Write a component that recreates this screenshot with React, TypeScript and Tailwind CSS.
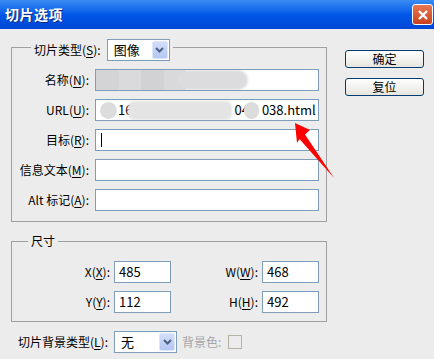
import React from 'react'

const font = { fontFamily: '"Noto Sans CJK SC", "Liberation Sans", sans-serif' }

function Key({ k }: { k: string }) {
    return (
        <>
            (<span className="underline underline-offset-2">{k}</span>):
        </>
    )
}

function Chevron() {
    return (
        <div className="w-[16px] h-[18px] rounded-[2px] border border-[#dfe8fb] bg-linear-to-b from-[#d3def9] to-[#b3c7f2] flex items-center justify-center">
            <svg width="9" height="6" viewBox="0 0 9 6">
                <path d="M1 1 L4.5 4.5 L8 1" stroke="#4d6185" strokeWidth="2" fill="none" />
            </svg>
        </div>
    )
}

function Select({ value, width }: { value: string; width: string }) {
    return (
        <div className={`${width} h-[22px] bg-white border border-[#7f9db9] flex items-center justify-between pl-[6px] pr-[1px]`}>
            <span className="text-[13px]">{value}</span>
            <Chevron />
        </div>
    )
}

function Field({ label, children }: { label: React.ReactNode; children?: React.ReactNode }) {
    return (
        <div className="flex items-center h-[22px]">
            <div className="w-[77px] text-right whitespace-nowrap">{label}</div>
            <div className="ml-[6px] w-[224px] h-[22px] bg-white border border-[#7f9db9] flex items-center overflow-hidden">
                {children}
            </div>
        </div>
    )
}

function Num({ value }: { value: string }) {
    return (
        <div className="w-[57px] h-[22px] bg-white border border-[#7f9db9] flex items-center pl-[4px] text-[13px]">
            {value}
        </div>
    )
}

function Button({ children }: { children: React.ReactNode }) {
    return (
        <div className="w-[79px] h-[18px] rounded-[3px] border border-[#003c74] bg-linear-to-b from-[#ffffff] to-[#e6e5df] flex items-center justify-center text-[12px]">
            {children}
        </div>
    )
}

export default function App() {
    return (
        <div className="relative w-[434px] h-[359px] bg-[#ececec] text-[12px] text-black overflow-hidden" style={font}>
            {/* title bar */}
            <div className="h-[29px] bg-linear-to-b from-[#3a8cf3] via-[#0058e8] to-[#0046d6] flex items-center justify-between pl-[5px] pr-[1px]">
                <span className="text-white font-bold text-[14px] tracking-[0.5px] [text-shadow:1px_1px_0_#0a2a80]">切片选项</span>
                <div className="w-[21px] h-[21px] rounded-[3px] border border-white bg-linear-to-b from-[#e9774f] to-[#c8401d] flex items-center justify-center">
                    <svg width="12" height="12" viewBox="0 0 12 12">
                        <path d="M2 2 L10 10 M10 2 L2 10" stroke="white" strokeWidth="2.4" />
                    </svg>
                </div>
            </div>

            <div className="flex">
                <div className="ml-[11px] w-[316px]">
                    {/* group 1 */}
                    <div className="relative mt-[18px] h-[175px] border border-[#a0a0a0] pt-[21px] flex flex-col gap-[8px]">
                        <div className="absolute left-[19px] -top-[9px] bg-[#ececec] flex items-center px-[3px]">
                            <span className="whitespace-nowrap">切片类型<Key k="S" /></span>
                            <div className="ml-[6px]">
                                <Select value="图像" width="w-[63px]" />
                            </div>
                        </div>
                        <Field label={<>名称<Key k="N" /></>}>
                            <div className="flex items-center h-full">
                                <div className="grid grid-cols-4 w-[90px] h-[20px]">
                                    <div className="bg-[#d4d4d7]" />
                                    <div className="bg-[#dadadd]" />
                                    <div className="bg-[#d2d2d5]" />
                                    <div className="bg-[#d9d9dc]" />
                                </div>
                                <div className="w-[70px] h-[20px] rounded-full bg-[#dcdcdf] blur-[1px] -ml-[8px]" />
                            </div>
                        </Field>
                        <Field label={<>URL<Key k="U" /></>}>
                            <div className="flex items-center h-full text-[13px] w-full">
                                <div className="ml-[4px] w-[17px] h-[17px] rounded-full bg-[#dcdcdc] shrink-0" />
                                <span className="ml-[1px]">16</span>
                                <div className="w-[104px] h-[19px] rounded-[6px] bg-[#e4e4e4] blur-[1px] shrink-0 -ml-[4px]" />
                                <span className="ml-[2px]">04</span>
                                <div className="w-[15px] h-[17px] rounded-full bg-[#dcdcdc] shrink-0 -ml-[5px]" />
                                <span className="ml-[3px]">038.html</span>
                            </div>
                        </Field>
                        <Field label={<>目标<Key k="R" /></>}>
                            <div className="ml-[5px] w-px h-[14px] bg-black" />
                        </Field>
                        <Field label={<>信息文本<Key k="M" /></>} />
                        <Field label={<>Alt 标记<Key k="A" /></>} />
                    </div>

                    {/* group 2 */}
                    <div className="relative mt-[19px] h-[81px] border border-[#a0a0a0] pt-[19px] flex flex-col gap-[8px]">
                        <div className="absolute left-[16px] -top-[8px] bg-[#ececec] px-[3px] leading-[14px]">尺寸</div>
                        <div className="flex items-center">
                            <div className="w-[98px] text-right">X<Key k="X" /></div>
                            <div className="ml-[4px]"><Num value="485" /></div>
                            <div className="w-[87px] text-right">W<Key k="W" /></div>
                            <div className="ml-[4px]"><Num value="468" /></div>
                        </div>
                        <div className="flex items-center">
                            <div className="w-[98px] text-right">Y<Key k="Y" /></div>
                            <div className="ml-[4px]"><Num value="112" /></div>
                            <div className="w-[87px] text-right">H<Key k="H" /></div>
                            <div className="ml-[4px]"><Num value="492" /></div>
                        </div>
                    </div>

                    {/* bottom row */}
                    <div className="mt-[9px] flex items-center pl-[7px]">
                        <span className="w-[92px] whitespace-nowrap">切片背景类型<Key k="L" /></span>
                        <div className="ml-[4px]">
                            <Select value="无" width="w-[63px]" />
                        </div>
                        <span className="ml-[5px] text-[#a7a6aa]">背景色:</span>
                        <div className="ml-[7px] w-[14px] h-[14px] border border-[#b5b2a4]" />
                    </div>
                </div>

                {/* buttons */}
                <div className="ml-[18px] pt-[21px] flex flex-col gap-[10px]">
                    <Button>确定</Button>
                    <Button>复位</Button>
                </div>
            </div>

            {/* red annotation arrow */}
            <svg className="absolute left-0 top-0 pointer-events-none" width="434" height="359">
                <polygon points="295,123 310,130 305,134.5 334,178 299.5,139 297,143" fill="#ff0000" />
            </svg>
        </div>
    )
}
